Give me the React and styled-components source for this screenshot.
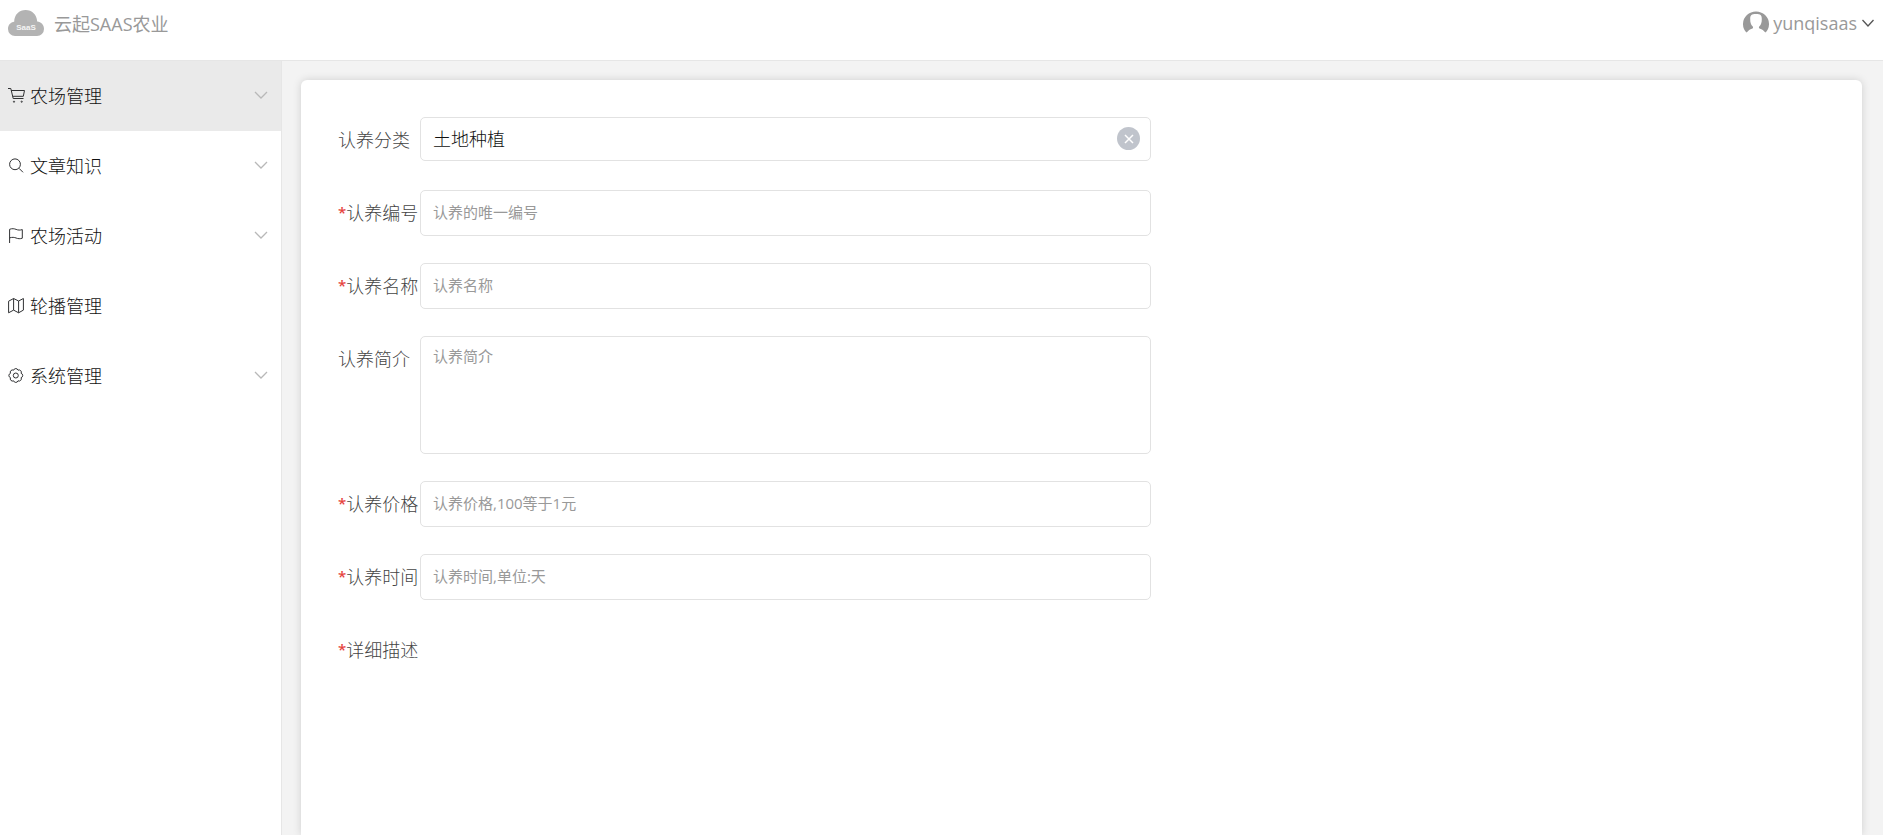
import { useState } from 'react'
import styled, { createGlobalStyle } from 'styled-components'

const menu = [
	{ name: '农场管理', icon: 'cart', children: true },
	{ name: '文章知识', icon: 'search', children: true },
	{ name: '农场活动', icon: 'flag', children: true },
	{ name: '轮播管理', icon: 'map' },
	{ name: '系统管理', icon: 'setting', children: true },
]

const fields = [
	{ id: 'code', label: '认养编号', placeholder: '认养的唯一编号', required: true },
	{ id: 'name', label: '认养名称', placeholder: '认养名称', required: true },
	{ id: 'intro', label: '认养简介', placeholder: '认养简介', multiline: true },
	{ id: 'price', label: '认养价格', placeholder: '认养价格,100等于1元', required: true },
	{ id: 'days', label: '认养时间', placeholder: '认养时间,单位:天', required: true },
]

const icons = {
	cart: (
		<>
			<path d="M0 1.500h2.800l2.400 10h10.300M3.200 3.500h13.300l-1.200 5.800H4.700" />
			<circle cx="6" cy="14.700" r=".6" />
			<circle cx="13.700" cy="14.700" r=".6" />
		</>
	),
	search: (
		<>
			<circle cx="7" cy="7.300" r="5.400" />
			<path d="M11 11.300l4 4" />
		</>
	),
	flag: <path d="M1.600 16V2.300c2.500-1 4.800-.6 6.500.1 2 .8 4 .9 6.200.2v8.600c-2.200.8-4.200.6-6.200-.2-1.700-.7-4-1-6.500-.1" />,
	map: <path d="M.6 4.200L5.600 1.500l5 2.500 4.800-2.500v11.600l-4.800 2.700-5-2.700-5 2.700zM5.600 1.500v11.600M10.600 4v11.800" />,
	setting: (
		<>
			<path d="M13.100 10.700A2.300 2.300 0 0 1 10 13.800A2.300 2.300 0 0 1 5.600 13.800A2.300 2.300 0 0 1 2.500 10.700A2.300 2.300 0 0 1 2.500 6.300A2.300 2.300 0 0 1 5.600 3.200A2.300 2.300 0 0 1 10 3.200A2.300 2.300 0 0 1 13.100 6.300A2.300 2.300 0 0 1 13.100 10.700z" />
			<circle cx="7.800" cy="8.500" r="2.500" />
		</>
	),
}

const MenuItem = ({ name, icon, children, active, onClick }) => (
	<MenuButton $active={active} onClick={onClick}>
		<MenuIcon viewBox="0 0 17 17" aria-hidden="true">{icons[icon]}</MenuIcon>
		<MenuName>{name}</MenuName>
		{children && <Arrow viewBox="0 0 14 8" $color="#b8b8b8"><path d="M1 1l6 6 6-6" /></Arrow>}
	</MenuButton>
)

const Field = ({ id, label, placeholder, required, multiline }) => (
	<Row>
		<Label htmlFor={id}>{required && <Star>*</Star>}{label}</Label>
		{multiline
			? <TextArea id={id} placeholder={placeholder} />
			: <Input id={id} placeholder={placeholder} />
		}
	</Row>
)

const App = () => {
	const [active, setActive] = useState('农场管理')
	const [category, setCategory] = useState('土地种植')

	return (
		<Page>
			<GlobalStyle />
			<Header>
				<Brand href="#">
					<Logo viewBox="0 0 36 26" aria-hidden="true">
						<path d="M7 26a7 7 0 0 1-7-7c0-4 2.600-6.700 6.200-7.200C6.200 4.500 11.300 0 17.600 0c6.400 0 11.200 4.500 11.600 11.600C33.200 12 36 15 36 19a7 7 0 0 1-7 7z" />
						<text x="18" y="20" textAnchor="middle">SaaS</text>
					</Logo>
					云起SAAS农业
				</Brand>
				<User>
					<Avatar viewBox="0 0 26 24" aria-hidden="true">
						<path d="M3.500 21.500A13 12.500 0 1 1 22.500 21.500l-1.500-1.300c-1-1.500-2.800-2-4.500-2.700-.8-.5-.8-1.500 0-2.200 1.600-1.600 2.300-3.800 2.300-7.300 0-3.800-1.300-5-5.800-5s-5.800 1.200-5.800 5c0 3.500.7 5.700 2.300 7.300.8.7.8 1.700 0 2.200-1.700.7-3.500 1.200-4.500 2.700z" />
					</Avatar>
					yunqisaas
					<Arrow viewBox="0 0 14 8" $color="#555"><path d="M1.500 1l5.500 6 5.500-6" /></Arrow>
				</User>
			</Header>

			<Body>
				<Sidebar>
					{menu.map(item => (
						<MenuItem
							key={item.name}
							{...item}
							active={item.name === active}
							onClick={() => setActive(item.name)}
						/>
					))}
				</Sidebar>

				<Main>
					<Card>
						<Form>
							<Row>
								<Label htmlFor="category">认养分类</Label>
								<Picker>
									<PickerInput
										id="category"
										value={category}
										onChange={e => setCategory(e.target.value)}
									/>
									{category &&
										<Clear type="button" aria-label="清空" onClick={() => setCategory('')}>
											<svg viewBox="0 0 10 10"><path d="M1 1l8 8M9 1l-8 8" /></svg>
										</Clear>
									}
								</Picker>
							</Row>
							{fields.map(field => <Field key={field.id} {...field} />)}
							<Row>
								<Label as="span"><Star>*</Star>详细描述</Label>
							</Row>
						</Form>
					</Card>
				</Main>
			</Body>
		</Page>
	)
}

export default App

const GlobalStyle = createGlobalStyle`
	* {
		box-sizing: border-box;
	}

	body {
		margin: 0;
		background: #fff;
	}

	body, button, input, textarea {
		font-family: 'Open Sans', 'Noto Sans CJK SC', sans-serif;
		font-size: 18px;
		font-weight: 400;
	}
`

const Page = styled.div`
	min-height: 100vh;
	display: flex;
	flex-direction: column;
`

const Header = styled.header`
	height: 61px;
	padding: 0 8px 15px;
	display: flex;
	align-items: center;
	justify-content: space-between;
	border-bottom: 1px solid #e6e6e6;
	color: #999;
`

const Brand = styled.a`
	display: flex;
	align-items: center;
	gap: 10px;
	color: inherit;
	text-decoration: none;
`

const Logo = styled.svg`
	width: 36px;
	height: 26px;
	fill: #b3b3b3;

	text {
		fill: #f4f4f4;
		font-family: 'Liberation Sans', sans-serif;
		font-size: 8px;
		font-weight: 700;
	}
`

const User = styled.button`
	display: flex;
	align-items: center;
	gap: 4px;
	padding: 0;
	border: none;
	background: none;
	color: #999;
	cursor: pointer;
`

const Avatar = styled.svg`
	width: 26px;
	height: 24px;
	fill: #999;
`

const Arrow = styled.svg`
	width: 14px;
	height: 8px;
	fill: none;
	stroke: ${props => props.$color};
	stroke-width: 1.3;
`

const Body = styled.div`
	flex: 1;
	display: flex;
`

const Sidebar = styled.nav`
	width: 282px;
	flex-shrink: 0;
	border-right: 1px solid #e6e6e6;
`

const MenuButton = styled.button`
	width: 100%;
	height: 70px;
	padding: 0 13px 2px 8px;
	display: flex;
	align-items: center;
	gap: 5px;
	border: none;
	background: ${props => props.$active ? '#eaeaea' : 'transparent'};
	color: #111;
	font-weight: 300;
	text-align: left;
	cursor: pointer;
`

const MenuIcon = styled.svg`
	width: 17px;
	height: 17px;
	fill: none;
	stroke: #303133;
	stroke-width: 1;
`

const MenuName = styled.span`
	flex: 1;
`

const Main = styled.main`
	flex: 1;
	display: flex;
	padding: 19px 21px 0 19px;
	background: #f3f3f3;
`

const Card = styled.section`
	flex: 1;
	padding: 37px;
	border-radius: 6px 6px 0 0;
	background: #fff;
	box-shadow: 0 0 8px rgba(0, 0, 0, .15);
`

const Form = styled.form`
	max-width: 813px;
	display: flex;
	flex-direction: column;
	gap: 27px;
`

const Row = styled.div`
	display: flex;
	align-items: flex-start;
`

const Label = styled.label`
	width: 82px;
	flex-shrink: 0;
	line-height: 46px;
	color: #444;
	font-weight: 300;
	white-space: nowrap;
`

const Star = styled.span`
	color: #e64340;
	font-size: 15px;
	font-weight: 600;
	line-height: 1;
	vertical-align: 2px;
`

const Input = styled.input`
	flex: 1;
	min-width: 0;
	height: 46px;
	padding: 0 12px 2px;
	border: 1px solid #e2e2e2;
	border-radius: 5px;
	outline: none;
	background: #fff;
	color: #111;
	font-size: 15px;

	&::placeholder {
		color: #999;
	}
`

const TextArea = styled(Input).attrs({ as: 'textarea' })`
	height: 118px;
	padding: 8px 12px;
	resize: none;
`

const Picker = styled.div`
	flex: 1;
	display: flex;
	position: relative;
`

const PickerInput = styled(Input)`
	height: 44px;
	padding-right: 44px;
	font-size: 18px;
	font-weight: 300;
`

const Clear = styled.button`
	position: absolute;
	top: 10px;
	right: 11px;
	width: 23px;
	height: 23px;
	padding: 0;
	display: flex;
	align-items: center;
	justify-content: center;
	border: none;
	border-radius: 50%;
	background: #c0c4cc;
	cursor: pointer;

	svg {
		width: 10px;
		height: 10px;
		stroke: #fff;
		stroke-width: 1.5;
	}
`
